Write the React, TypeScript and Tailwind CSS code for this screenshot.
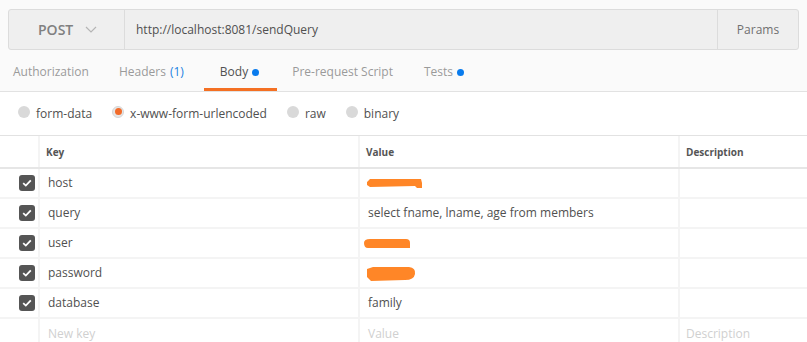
import React from "react";

const font = { fontFamily: '"Open Sans", "Noto Sans", Arial, sans-serif' };

const rows = [
  { key: "host", value: "", blob: "host" },
  { key: "query", value: "select fname, lname, age from members" },
  { key: "user", value: "", blob: "user" },
  { key: "password", value: "", blob: "password" },
  { key: "database", value: "family" },
];

const Blob: React.FC<{ kind: string }> = ({ kind }) => {
  if (kind === "host")
    return (
      <svg width="60" height="16" viewBox="0 0 60 16" className="-ml-[2px] mt-[2px]">
        <path d="M1 6 L4 3 L55 3 L56 7 L56 12 L51 12 L49 10 L4 11 L1 9 Z" fill="#ff8627" />
      </svg>
    );
  if (kind === "user")
    return (
      <svg width="60" height="16" viewBox="0 0 60 16" className="-ml-[6px] mt-[1px]">
        <path d="M2 7 Q2 3 8 3 L44 3 Q48 3 48 7 L48 12 L6 12 Q2 12 2 7 Z" fill="#ff8627" />
      </svg>
    );
  return (
    <svg width="60" height="18" viewBox="0 0 60 18" className="-ml-[3px] mt-[2px]">
      <path d="M2 4 L8 2 L44 2 Q51 3 50 9 Q49 15 40 15 L6 16 L2 12 Z" fill="#ff8627" />
    </svg>
  );
};

const Check: React.FC = () => (
  <div className="w-4 h-4 rounded-[3px] bg-[#555555] flex items-center justify-center">
    <svg width="10" height="8" viewBox="0 0 10 8">
      <path d="M1.2 4.2 L3.8 6.6 L8.8 1.4" stroke="#fff" strokeWidth="1.8" fill="none" />
    </svg>
  </div>
);

const Radio: React.FC<{ active?: boolean; label: string }> = ({ active, label }) => (
  <div className="flex items-center gap-[6px]">
    <div
      className={
        "w-3 h-3 rounded-full flex items-center justify-center -mt-[4px] " +
        (active ? "bg-[#e6e6e6] border border-[#d6d6d6]" : "bg-[#d9d9d9]")
      }
    >
      {active && <div className="w-[7px] h-[7px] rounded-full bg-[#f26b2a]" />}
    </div>
    <span className="text-[12px] text-[#505050]">{label}</span>
  </div>
);

const cols = "grid grid-cols-[40px_320px_320px_1fr]";

export default function App() {
  return (
    <div className="w-[807px] h-[342px] overflow-hidden bg-white" style={font}>
      {/* top area */}
      <div className="bg-[#fafafa] border-b border-[#e2e2e2]">
        <div className="pt-[9px] px-[8px]">
          <div className="flex h-[41px] border border-[#dcdcdc] rounded-[3px] bg-[#efefef]">
            <div className="w-[116px] flex items-center pl-[29px] gap-[12px] border-r border-[#dcdcdc]">
              <span className="text-[14px] font-semibold text-[#808080]">POST</span>
              <svg width="12" height="8" viewBox="0 0 12 8">
                <path d="M1 1 L6 6 L11 1" stroke="#b5b5b5" strokeWidth="1.2" fill="none" />
              </svg>
            </div>
            <div className="flex-1 flex items-center pl-[11px] text-[12px] text-[#505050]">
              http://localhost:8081/sendQuery
            </div>
            <div className="w-[81px] flex items-center justify-center border-l border-[#dcdcdc] text-[12px] text-[#707070]">
              Params
            </div>
          </div>
        </div>
        <div className="flex h-[41px] items-stretch pl-[13px] pt-[3px] text-[12px] text-[#9a9a9a]">
          <div className="flex items-center">Authorization</div>
          <div className="flex items-center ml-[30px]">
            Headers <span className="ml-[4px] text-[#1a82e2]">(1)</span>
          </div>
          <div className="relative flex items-center ml-[20px] pl-[16px] pr-[18px] text-[#505050]">
            Body
            <span className="ml-[4px] w-[7px] h-[7px] rounded-full bg-[#097bed]" />
            <div className="absolute left-0 right-0 bottom-0 h-[3px] bg-[#f47023]" />
          </div>
          <div className="flex items-center ml-[15px]">Pre-request Script</div>
          <div className="flex items-center ml-[31px]">
            Tests
            <span className="ml-[4px] w-[7px] h-[7px] rounded-full bg-[#097bed]" />
          </div>
        </div>
      </div>

      {/* radios */}
      <div className="flex items-center h-[43px] pl-[18px] gap-[20px]">
        <Radio label="form-data" />
        <Radio active label="x-www-form-urlencoded" />
        <Radio label="raw" />
        <Radio label="binary" />
      </div>

      {/* table */}
      <div className="border-t border-[#e2e2e2]">
        <div className={cols + " h-[33px] border-b-2 border-[#e6e6e6] text-[10px] font-bold text-[#555555]"}>
          <div className="border-r-2 border-[#f4f4f4]" />
          <div className="flex items-center pl-[6px] pt-[2px] border-r-2 border-[#f4f4f4]">Key</div>
          <div className="flex items-center pl-[6px] pt-[2px] border-r-2 border-[#f4f4f4]">Value</div>
          <div className="flex items-center pl-[6px] pt-[2px]">Description</div>
        </div>
        {rows.map((r) => (
          <div
            key={r.key}
            className={cols + " h-[30px] border-b-2 border-[#f4f4f4] text-[12px] text-[#505050]"}
          >
            <div className="flex items-center justify-end pr-[3px] border-r-2 border-[#f4f4f4]">
              <Check />
            </div>
            <div className="flex items-center pl-[8px] border-r-2 border-[#f4f4f4]">{r.key}</div>
            <div className="flex items-center pl-[8px] border-r-2 border-[#f4f4f4]">
              {r.blob ? <Blob kind={r.blob} /> : r.value}
            </div>
            <div />
          </div>
        ))}
        <div className={cols + " h-[30px] text-[12px] text-[#d0d0d0]"}>
          <div className="border-r-2 border-[#f4f4f4]" />
          <div className="flex items-center pl-[8px] border-r-2 border-[#f4f4f4]">New key</div>
          <div className="flex items-center pl-[8px] border-r-2 border-[#f4f4f4]">Value</div>
          <div className="flex items-center pl-[6px]">Description</div>
        </div>
      </div>
    </div>
  );
}
